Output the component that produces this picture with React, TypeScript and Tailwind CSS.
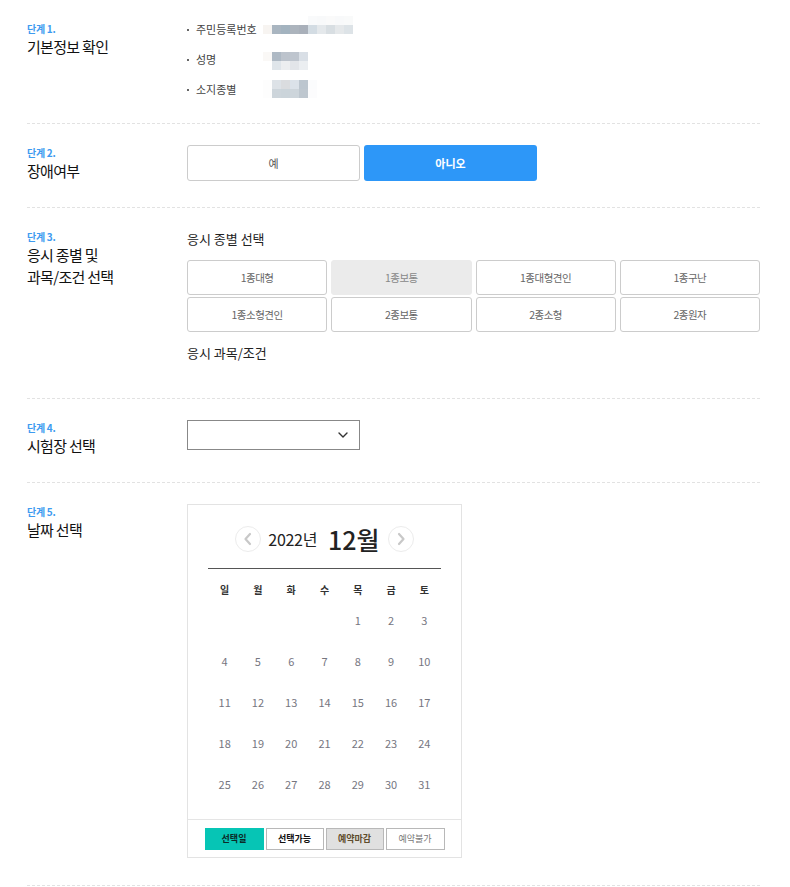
import React from 'react'

const BLUR: Record<string, string[][]> = {
  rrn: [
    ['transparent', 'transparent', 'transparent', 'transparent', 'transparent', '#f9fafb', '#f8f9fa', '#fafafa', '#f8f9fa', '#f9fafa'],
    ['#f7f4f1', '#a9b5c0', '#a3b3bf', '#acb4bd', '#a9b0ba', '#d3dce3', '#e4e8eb', '#d8dee2', '#e5e8ea', '#dde3e7'],
  ],
  name: [
    ['#faf8f6', '#aeb9c4', '#bcc3cc', '#bec5ce', '#d9dfe6'],
    ['transparent', '#dfe5ea', '#eceef0', '#e2e5e9', '#ebeef1'],
  ],
  license: [
    ['#fdfdfd', '#dde2e7', '#dadcdf', '#dbe2e9', '#bcc6cf', '#fbfcfd'],
    ['#fdfdfd', '#cdd5db', '#cbd4da', '#cdd5db', '#bec7cf', '#fcfcfd'],
  ],
}

const LICENSES = ['1종대형', '1종보통', '1종대형견인', '1종구난', '1종소형견인', '2종보통', '2종소형', '2종원자']
const WEEK = ['일', '월', '화', '수', '목', '금', '토']

function Mosaic({ rows, className }: { rows: string[][]; className?: string }) {
  return (
    <div className={className}>
      {rows.map((row, i) => (
        <div key={i} className="flex">
          {row.map((c, j) => (
            <span key={j} className="block w-[9px] h-[9px]" style={{ background: c }} />
          ))}
        </div>
      ))}
    </div>
  )
}

function Step({ no, title, children, className = 'pb-[25px]' }: { no: number; title: React.ReactNode; children: React.ReactNode; className?: string }) {
  return (
    <section className={`flex border-b border-dashed border-[#e2e2e2] pt-[21px] ${className}`}>
      <div className="w-[160px] shrink-0 pt-[2px]">
        <p className="text-[10px] leading-[12px] font-bold text-[#3d9bf0] tracking-[-0.3px]">단계 {no}.</p>
        <h2 className="mt-px text-[15px] leading-[22px] tracking-[-0.7px] text-[#111]">{title}</h2>
      </div>
      <div className="flex-1 min-w-0">{children}</div>
    </section>
  )
}

function InfoRow({ label, blur, shift }: { label: string; blur: string[][]; shift: string }) {
  return (
    <div className="flex items-center h-[30px]">
      <span className="w-[2px] h-[2px] bg-[#666] mt-[2px]" />
      <span className="ml-[7px] w-[67px] text-[11px] text-[#444]">{label}</span>
      <Mosaic rows={blur} className={shift} />
    </div>
  )
}

function Chevron({ dir }: { dir: 'left' | 'right' }) {
  return (
    <div className="w-[26px] h-[26px] rounded-full border border-[#ececec] flex items-center justify-center">
      <svg width="10" height="14" viewBox="0 0 10 14" fill="none">
        <polyline
          points={dir === 'left' ? '7,2 2.5,7 7,12' : '3,2 7.5,7 3,12'}
          stroke="#c8c8c8"
          strokeWidth="2.2"
          strokeLinecap="round"
          strokeLinejoin="round"
        />
      </svg>
    </div>
  )
}

function Calendar() {
  const cells: (number | null)[] = [null, null, null, null]
  for (let d = 1; d <= 31; d++) cells.push(d)
  return (
    <div className="w-[275px] border border-[#e3e3e3] bg-white pb-[7px]">
      <div className="mt-[21px] h-[26px] flex items-center justify-center">
        <Chevron dir="left" />
        <span className="ml-[7px] text-[16px] leading-[26px] text-[#222] tracking-[-0.3px]">2022년</span>
        <span className="ml-[11px] text-[25px] leading-[26px] font-medium text-[#222]">12월</span>
        <span className="ml-[8px]"><Chevron dir="right" /></span>
      </div>
      <div className="mx-[20px] mt-[16px] border-t border-[#555]" />
      <div className="mx-[20px] mt-[9px] grid grid-cols-7">
        {WEEK.map((w) => (
          <div key={w} className="h-[22px] flex items-center justify-center text-[10px] font-bold text-[#333]">{w}</div>
        ))}
        {cells.map((d, i) => (
          <div key={i} className="h-[41px] flex items-center justify-center text-[11px] text-[#76767f]">{d ?? ''}</div>
        ))}
      </div>
      <div className="mt-[14px] border-t border-[#e5e5e5]" />
      <div className="mt-[8px] flex justify-center gap-[2px]">
        <span className="w-[59px] h-[22px] flex items-center justify-center bg-[#06c5b5] text-[9px] font-bold text-[#0b2b28]">선택일</span>
        <span className="w-[58px] h-[22px] flex items-center justify-center border border-[#b8b8b8] bg-white text-[9px] font-bold text-[#111]">선택가능</span>
        <span className="w-[58px] h-[22px] flex items-center justify-center border border-[#b8b8b8] bg-[#e0e0e0] text-[9px] font-bold text-[#5f4c2c]">예약마감</span>
        <span className="w-[59px] h-[22px] flex items-center justify-center border border-[#b8b8b8] bg-white text-[9px] text-[#777]">예약불가</span>
      </div>
    </div>
  )
}

export default function App() {
  return (
    <div className="w-[790px] min-h-[887px] bg-white pl-[27px] pr-[30px] font-['Noto_Sans_CJK_KR','Noto_Sans',sans-serif] text-[#222]">
      <Step no={1} title="기본정보 확인" className="pb-[19px]">
        <div className="-mt-[7px]">
          <InfoRow label="주민등록번호" blur={BLUR.rrn} shift="-mt-[8px]" />
          <InfoRow label="성명" blur={BLUR.name} shift="mt-[4px]" />
          <InfoRow label="소지종별" blur={BLUR.license} shift="-mt-[1px]" />
        </div>
      </Step>

      <Step no={2} title="장애여부">
        <div className="flex gap-[4px]">
          <button className="w-[173px] h-[36px] rounded-[3px] border border-[#cccccc] bg-white text-[11px] text-[#555]">예</button>
          <button className="w-[173px] h-[36px] rounded-[3px] bg-[#2d97f8] text-[11px] font-bold text-white">아니오</button>
        </div>
      </Step>

      <Step
        no={3}
        title={
          <>
            응시 종별 및<br />과목/조건 선택
          </>
        }
      >
        <p className="text-[13px] leading-[20px] text-[#222]">응시 종별 선택</p>
        <div className="mt-[11px] grid grid-cols-4 gap-x-[4px] gap-y-[2px]">
          {LICENSES.map((l, i) => (
            <div
              key={l}
              className={
                i === 1
                  ? 'h-[35px] rounded-[3px] border border-[#ebebeb] bg-[#ebebeb] flex items-center justify-center text-[10.5px] tracking-[-0.5px] text-[#888]'
                  : 'h-[35px] rounded-[3px] border border-[#cccccc] bg-white flex items-center justify-center text-[10.5px] tracking-[-0.5px] text-[#666]'
              }
            >
              {l}
            </div>
          ))}
        </div>
        <p className="mt-[11px] mb-[10px] text-[13px] leading-[20px] text-[#222]">응시 과목/조건</p>
      </Step>

      <Step no={4} title="시험장 선택">
        <div className="w-[173px] h-[30px] border border-[#888] bg-white flex items-center justify-end pr-[11px]">
          <svg width="10" height="6" viewBox="0 0 10 6" fill="none">
            <polyline points="1,1 5,5 9,1" stroke="#333" strokeWidth="1.4" strokeLinecap="round" strokeLinejoin="round" />
          </svg>
        </div>
      </Step>

      <Step no={5} title="날짜 선택" className="pb-[27px]">
        <Calendar />
      </Step>
    </div>
  )
}
